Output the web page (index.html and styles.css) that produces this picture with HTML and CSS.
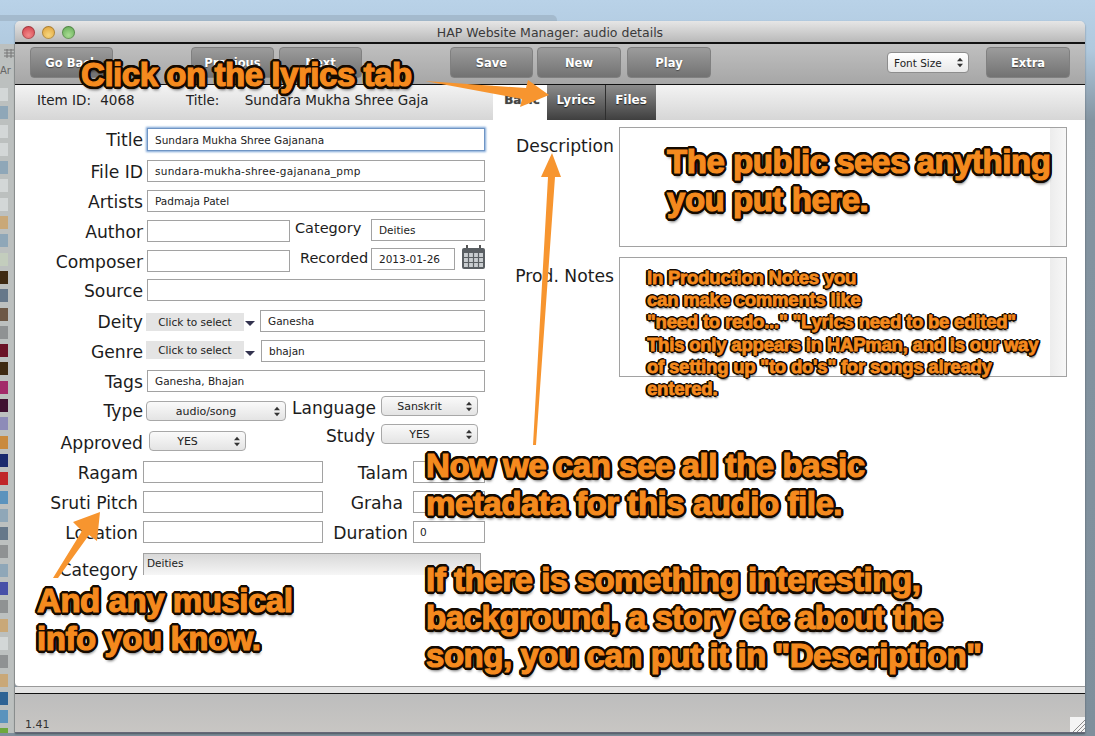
FILE: index.html
```html
<!DOCTYPE html>
<html lang="en">

<head>
    <meta charset="UTF-8">
    <title>HAP Website Manager: audio details</title>
    <link rel="stylesheet" href="styles.css">
</head>

<body>
    <!-- Window peeking out behind the app -->
    <div class="back-window"></div>

    <div class="desktop">
        <!-- Strip of the window behind, left of the app -->
        <div class="side-strip">
            <svg class="side-icon" viewBox="0 0 10 10"><path d="M0 1h10M0 4h10M0 7h10M3 0v9M7 0v9" stroke="#777" fill="none"/></svg>
            <div class="side-label">Ar</div>
            <div class="tile pale"></div>
            <div class="tile steel"></div>
            <div class="tile pale"></div>
            <div class="tile pale"></div>
            <div class="tile steel"></div>
            <div class="tile pale"></div>
            <div class="tile pale"></div>
            <div class="tile tan"></div>
            <div class="tile steel"></div>
            <div class="tile sage"></div>
            <div class="tile umber"></div>
            <div class="tile slate"></div>
            <div class="tile brown"></div>
            <div class="tile grey"></div>
            <div class="tile wine"></div>
            <div class="tile umber"></div>
            <div class="tile magenta"></div>
            <div class="tile plum"></div>
            <div class="tile lavender"></div>
            <div class="tile orange"></div>
            <div class="tile navy"></div>
            <div class="tile red"></div>
            <div class="tile sky"></div>
            <div class="tile steel"></div>
            <div class="tile slate"></div>
            <div class="tile grey"></div>
            <div class="tile steel"></div>
            <div class="tile indigo"></div>
            <div class="tile grey"></div>
            <div class="tile tan"></div>
            <div class="tile pale"></div>
            <div class="tile grey"></div>
            <div class="tile tan"></div>
            <div class="tile ocean"></div>
            <div class="tile sky"></div>
            <div class="tile green"></div>
        </div>

        <div class="window">
            <div class="titlebar">
                <div class="lights">
                    <span class="light light-red"></span>
                    <span class="light light-yellow"></span>
                    <span class="light light-green"></span>
                </div>
                HAP Website Manager: audio details
            </div>

            <div class="toolbar">
                <div class="btn btn-back">Go Back</div>
                <div class="btn btn-prev">Previous</div>
                <div class="btn btn-next">Next</div>
                <div class="btn btn-save">Save</div>
                <div class="btn btn-new">New</div>
                <div class="btn btn-play">Play</div>
                <div class="font-select">
                    Font Size
                    <svg class="updown" viewBox="0 0 7 11"><path d="M3.500 0 7 4H0zM3.500 11 0 7h7z"/></svg>
                </div>
                <div class="btn btn-extra">Extra</div>
            </div>

            <div class="tabstrip">
                <div class="item-info">
                    <span class="info-id">Item ID:</span>
                    <span class="info-num">4068</span>
                    <span class="info-title">Title:</span>
                    <span>Sundara Mukha Shree Gaja</span>
                </div>
                <div class="tab tab-active">Basic</div>
                <div class="tab tab-lyrics">Lyrics</div>
                <div class="tab tab-files">Files</div>
            </div>

            <div class="content">
                <!-- Left column of fields -->
                <div class="form">
                    <div class="row row-title">
                        <div class="label">Title</div>
                        <div class="field field-focus">Sundara Mukha Shree Gajanana</div>
                    </div>
                    <div class="row">
                        <div class="label">File ID</div>
                        <div class="field w-full spaced">sundara-mukha-shree-gajanana_pmp</div>
                    </div>
                    <div class="row">
                        <div class="label">Artists</div>
                        <div class="field w-full">Padmaja Patel</div>
                    </div>
                    <div class="row">
                        <div class="label">Author</div>
                        <div class="field w-half"></div>
                        <div class="side-name side-category">Category</div>
                        <div class="field w-cat up-1">Deities</div>
                    </div>
                    <div class="row row-composer">
                        <div class="label">Composer</div>
                        <div class="field w-half"></div>
                        <div class="side-name side-recorded">Recorded</div>
                        <div class="field w-date up-2">2013-01-26</div>
                        <svg class="calendar" viewBox="0 0 23 25">
                            <rect x="4" y="0" width="2" height="4" fill="#555"/>
                            <rect x="17" y="0" width="2" height="4" fill="#555"/>
                            <rect x="0" y="3" width="23" height="21" rx="2" fill="#5a5f63"/>
                            <path d="M2 8h19v14H2z" fill="#c9cdd0"/>
                            <path d="M6.500 8v14M11.500 8v14M16.500 8v14M2 12.500h19M2 17.500h19" stroke="#5a5f63" stroke-width="1.200"/>
                        </svg>
                    </div>
                    <div class="row row-source">
                        <div class="label">Source</div>
                        <div class="field w-full"></div>
                    </div>
                    <div class="row">
                        <div class="label">Deity</div>
                        <div class="picker">Click to select</div>
                        <div class="picker-arrow"></div>
                        <div class="field w-pick">Ganesha</div>
                    </div>
                    <div class="row">
                        <div class="label">Genre</div>
                        <div class="picker picker-high">Click to select</div>
                        <div class="picker-arrow"></div>
                        <div class="field w-pick2">bhajan</div>
                    </div>
                    <div class="row">
                        <div class="label">Tags</div>
                        <div class="field w-full">Ganesha, Bhajan</div>
                    </div>
                    <div class="row row-type">
                        <div class="label label-up">Type</div>
                        <div class="select w-type">audio/song
                            <svg class="updown" viewBox="0 0 7 11"><path d="M3.500 0 7 4H0zM3.500 11 0 7h7z"/></svg>
                        </div>
                        <div class="side-name side-language">Language</div>
                        <div class="select w-lang lift-5">Sanskrit
                            <svg class="updown" viewBox="0 0 7 11"><path d="M3.500 0 7 4H0zM3.500 11 0 7h7z"/></svg>
                        </div>
                    </div>
                    <div class="row row-approved">
                        <div class="label">Approved</div>
                        <div class="select w-appr">YES
                            <svg class="updown" viewBox="0 0 7 11"><path d="M3.500 0 7 4H0zM3.500 11 0 7h7z"/></svg>
                        </div>
                        <div class="side-name side-study">Study</div>
                        <div class="select w-lang lift-8">YES
                            <svg class="updown" viewBox="0 0 7 11"><path d="M3.500 0 7 4H0zM3.500 11 0 7h7z"/></svg>
                        </div>
                    </div>
                    <div class="row">
                        <div class="label label-short">Ragam</div>
                        <div class="field w-music"></div>
                        <div class="side-name side-music">Talam</div>
                        <div class="field w-small"></div>
                    </div>
                    <div class="row">
                        <div class="label label-short">Sruti Pitch</div>
                        <div class="field w-music"></div>
                        <div class="side-name side-music side-graha">Graha</div>
                        <div class="field w-small"></div>
                    </div>
                    <div class="row row-location">
                        <div class="label label-short">Location</div>
                        <div class="field w-music"></div>
                        <div class="side-name side-music">Duration</div>
                        <div class="field w-small">0</div>
                    </div>
                    <div class="row">
                        <div class="label label-short label-low">Category</div>
                        <div class="category-box">Deities</div>
                    </div>
                </div>

                <!-- Right column of text areas -->
                <div class="notes">
                    <div class="note-row">
                        <div class="note-label">Description</div>
                        <div class="textarea"><div class="scroll-track"></div></div>
                    </div>
                    <div class="note-row">
                        <div class="note-label">Prod. Notes</div>
                        <div class="textarea"><div class="scroll-track"></div></div>
                    </div>
                </div>
            </div>

            <div class="status-gap"></div>
            <div class="statusbar">
                1.41
                <svg class="grip" viewBox="0 0 15 15">
                    <rect width="15" height="15" fill="#f4f4f4"/>
                    <path d="M3 15 15 3M7 15l8-8M11 15l4-4" stroke="#8a8a8a" stroke-width="1"/>
                </svg>
            </div>
        </div>

        <div class="right-gap"></div>
    </div>

    <!-- Callouts drawn over the screenshot -->
    <svg class="arrows" viewBox="0 0 1095 736">
        <path d="M425 81 L526 88 L528 80 L549 95 L520 107 L522 99 Z"/>
        <path d="M533 445 L548 177 L541 177 L552 153 L561 177 L555 177 L536 445 Z"/>
        <path d="M53 578 L82 531 L73 522 L100 512 L97 541 L89 535 L58 578 Z"/>
    </svg>
    <div class="callout big callout-click">Click on the lyrics tab</div>
    <div class="callout big callout-public">The public sees anything<br>you put here.</div>
    <div class="callout small callout-prod">In Production Notes you<br>can make comments like<br>"need to redo..." "Lyrics need to be edited"<br>This only appears in HAPman, and is our way<br>of setting up "to do's" for songs already<br>entered.</div>
    <div class="callout big callout-meta">Now we can see all the basic<br>metadata for this audio file.</div>
    <div class="callout big callout-story">If there is something interesting,<br>background, a story etc about the<br>song, you can put it in "Description"</div>
    <div class="callout big callout-music">And any musical<br>info you know.</div>
</body>

</html>
```

FILE: styles.css
```css
/* General Styling */
html, body {
    margin: 0;
    padding: 0;
}

body {
    position: relative;
    width: 1095px;
    height: 736px;
    overflow: hidden;
    background: linear-gradient(180deg, #b9d2e8 0, #b0c9de 50px, #8494a1 120px, #7f8f9c 100%);
    font-family: "DejaVu Sans", sans-serif;
    color: #222;
}

.back-window {
    width: 557px;
    height: 6px;
    margin-top: 15px;
    background: #a4bacd;
    border-top-right-radius: 5px;
}

.desktop {
    display: flex;
    height: 715px;
}

/* Left strip */
.side-strip {
    width: 15px;
    height: 689px;
    margin-top: 23px;
    padding: 5px 7px 0 0;
    box-sizing: border-box;
    background: #bcc0bf;
    border-right: 1px solid #9a9e9e;
    overflow: hidden;
}

.side-icon {
    display: block;
    width: 10px;
    height: 10px;
    margin-left: 4px;
}

.side-label {
    height: 29px;
    width: 14px;
    padding-top: 6px;
    box-sizing: border-box;
    font-size: 10px;
    color: #666;
}

.tile {
    width: 8px;
    height: 13px;
    margin-bottom: 5.300px;
}

.pale { background: #d3d7d7; }
.steel { background: #8fa7b8; }
.tan { background: #c9a878; }
.sage { background: #c3cdbd; }
.umber { background: #3e2a12; }
.slate { background: #66788a; }
.brown { background: #6d5846; }
.grey { background: #8f9293; }
.wine { background: #6b1226; }
.magenta { background: #a32a6a; }
.plum { background: #3f1030; }
.lavender { background: #8d8bb8; }
.orange { background: #c98a3e; }
.navy { background: #1a2a6e; }
.red { background: #c0262a; }
.sky { background: #5b93bd; }
.indigo { background: #4850a8; }
.ocean { background: #2e6394; }
.green { background: #6da83e; }

/* Window */
.window {
    width: 1070px;
    height: 712px;
    display: flex;
    flex-direction: column;
    border-radius: 5px 5px 0 0;
    overflow: hidden;
    box-shadow: 0 1px 2px rgba(0, 0, 0, 0.4);
}

.right-gap {
    flex: 1;
}

.titlebar {
    position: relative;
    height: 21px;
    line-height: 23px;
    text-align: center;
    font-size: 12.500px;
    color: #3a3a3a;
    background: linear-gradient(180deg, #e6e6e6, #b9b9b9);
    border-bottom: 2px solid #111;
}

.lights {
    position: absolute;
    left: 7px;
    top: 5px;
    display: flex;
    gap: 7px;
}

.light {
    width: 13px;
    height: 13px;
    border-radius: 50%;
    box-shadow: inset 0 0 0 1px rgba(0, 0, 0, 0.25);
}

.light-red { background: radial-gradient(circle at 50% 70%, #f28a8a, #cf3440); }
.light-yellow { background: radial-gradient(circle at 50% 70%, #f6d67e, #dd9a2e); }
.light-green { background: radial-gradient(circle at 50% 70%, #a8dc92, #58a44c); }

.toolbar {
    display: flex;
    align-items: flex-start;
    height: 41px;
    padding-top: 3px;
    box-sizing: border-box;
    background: linear-gradient(180deg, #c0c0c0, #a6a6a6);
    border-bottom: 1px solid #111;
}

.btn {
    width: 83px;
    height: 31px;
    line-height: 30px;
    text-align: center;
    font-size: 11.500px;
    font-weight: bold;
    color: #fff;
    text-shadow: 0 1px 1px #444;
    background: linear-gradient(180deg, #9c9c9c, #727272);
    border: 1px solid #808080;
    border-radius: 4px;
    box-sizing: border-box;
}

.btn-back { margin-left: 15px; }
.btn-prev { margin-left: 78px; }
.btn-next { margin-left: 5px; }
.btn-save { margin-left: 88px; }
.btn-new { margin-left: 4px; width: 84px; }
.btn-play { margin-left: 6px; width: 84px; }
.btn-extra { margin-left: 17px; width: 84px; }

.font-select {
    display: flex;
    justify-content: space-between;
    align-items: center;
    width: 82px;
    height: 21px;
    margin: 5px 0 0 176px;
    padding: 0 5px 0 6px;
    box-sizing: border-box;
    font-size: 10.500px;
    color: #222;
    background: linear-gradient(180deg, #fff, #e8e8e8);
    border: 1px solid #8d8d8d;
    border-radius: 4px;
}

.updown {
    width: 6px;
    height: 11px;
    fill: #333;
}

/* Tabs */
.tabstrip {
    display: flex;
    height: 35px;
    background: linear-gradient(180deg, #f3f3f3, #d6d6d6);
}

.item-info {
    width: 456px;
    padding: 7px 0 0 22px;
    box-sizing: border-box;
    font-size: 13.500px;
    color: #222;
}

.info-num { margin-left: 5px; }
.info-title { margin: 0 21px 0 47px; }

.tab {
    font-size: 12px;
    font-weight: bold;
    line-height: 30px;
    text-align: center;
    color: #fff;
    text-shadow: 0 1px 1px #222;
    background: linear-gradient(180deg, #8c8c8c, #3f3f3f);
}

.tab-active {
    margin-left: 22px;
    width: 54px;
    padding-left: 4px;
    box-sizing: border-box;
    color: #444;
    text-shadow: 0 0 1px #888;
    background: #fff;
}

.tab-lyrics {
    width: 58px;
    border-right: 1px solid #2e2e2e;
}

.tab-files {
    width: 50px;
}

/* Form */
.content {
    flex: 1;
    display: flex;
    background: #fff;
    border-bottom: 1px solid #999;
    border-radius: 0 0 0 4px;
}

.form {
    width: 475px;
    padding-top: 8px;
}

.row {
    display: flex;
    align-items: flex-start;
    height: 30px;
}

.row-title { height: 32px; }
.row-composer { height: 29px; }
.row-source { height: 31px; }
.row-type { margin-top: 1px; height: 30px; }
.row-location { height: 32px; }

.label {
    width: 128px;
    height: 22px;
    margin-right: 4px;
    line-height: 24px;
    text-align: right;
    font-size: 17.200px;
    color: #1c1c1c;
    flex-shrink: 0;
}

.label-short {
    width: 123px;
    margin-right: 5px;
}

.label-low {
    margin-top: 5px;
}

.label-up {
    margin-top: -2px;
}

.field {
    height: 22px;
    line-height: 20px;
    padding-left: 7px;
    box-sizing: border-box;
    font-size: 10.500px;
    color: #222;
    background: #fff;
    border: 1px solid #a2a2a2;
    flex-shrink: 0;
}

.field-focus {
    width: 338px;
    height: 23px;
    line-height: 22px;
    border: 1px solid #6f95c4;
    box-shadow: 0 0 2px 1px #7ba4d6;
}

.spaced { letter-spacing: 0.280px; }

.w-full { width: 338px; }
.w-half { width: 143px; }
.w-cat { width: 114px; }
.w-date { width: 84px; }
.w-pick { width: 225px; }
.w-pick2 { width: 224px; margin-left: 1px; }
.w-music { width: 180px; }
.w-small { width: 72px; padding-left: 6px; }

.up-1 { margin-top: -1px; }
.up-2 { margin-top: -2px; }

.side-name {
    flex-shrink: 0;
    text-align: right;
    font-size: 15px;
    color: #1c1c1c;
}

.side-category { width: 62px; margin: -3px 14px 0 5px; line-height: 22px; font-size: 14.500px; text-align: left; }
.side-recorded { width: 64px; margin: -3px 7px 0 10px; line-height: 22px; font-size: 14.500px; text-align: left; }
.side-language { width: 90px; margin: -4px 5px 0 0; line-height: 22px; font-size: 17px; }
.side-study { width: 129px; margin: -6px 6px 0 0; line-height: 22px; font-size: 17px; }
.side-music { width: 85px; margin-right: 5px; line-height: 24px; font-size: 17.200px; }
.side-graha { width: 80px; margin-right: 10px; }

.calendar {
    width: 23px;
    height: 25px;
    margin: -5px 0 0 7px;
}

.picker {
    width: 98px;
    height: 18px;
    line-height: 18px;
    margin: 3px 0 0 -1px;
    text-align: center;
    font-size: 10.500px;
    background: #e4e4e4;
    flex-shrink: 0;
}

.picker-high {
    margin-top: 1px;
}

.picker-arrow {
    width: 0;
    height: 0;
    margin: 11px 5px 0 1px;
    border-left: 5px solid transparent;
    border-right: 5px solid transparent;
    border-top: 5px solid #33334f;
    flex-shrink: 0;
}

.select {
    display: flex;
    justify-content: space-between;
    align-items: center;
    height: 20px;
    padding: 0 5px 0 0;
    box-sizing: border-box;
    font-size: 11px;
    color: #222;
    background: linear-gradient(180deg, #fafafa, #e4e4e4);
    border: 1px solid #a8a8a8;
    border-radius: 4px;
    flex-shrink: 0;
}

.select::before {
    content: "";
    width: 0;
}

.select .updown {
    margin-left: 9px;
}

.w-type { width: 140px; margin-left: -1px; }
.w-appr { width: 97px; margin-left: 2px; }
.w-lang { width: 97px; }
.lift-5 { margin-top: -5px; }
.lift-8 { margin-top: -7px; }

.category-box {
    width: 338px;
    height: 22px;
    padding: 3px 0 0 3px;
    box-sizing: border-box;
    font-size: 10.500px;
    background: linear-gradient(180deg, #d8d8d8, #f6f6f6);
    border: 1px solid #a2a2a2;
    border-bottom: 0;
}

/* Text areas */
.notes {
    padding-top: 7px;
}

.note-row {
    display: flex;
    margin-bottom: 10px;
}

.note-label {
    width: 124px;
    padding-top: 9px;
    margin-right: 5px;
    text-align: right;
    font-size: 17.200px;
    color: #1c1c1c;
}

.textarea {
    display: flex;
    justify-content: flex-end;
    width: 448px;
    height: 120px;
    box-sizing: border-box;
    background: #fff;
    border: 1px solid #a2a2a2;
}

.scroll-track {
    width: 16px;
    background: linear-gradient(90deg, #ececec, #f7f7f7);
}

/* Bottom of the window */
.status-gap {
    height: 6px;
    background: #e4e4e4;
    border-bottom: 1px solid #111;
}

.statusbar {
    position: relative;
    height: 39px;
    padding: 24px 0 0 10px;
    box-sizing: border-box;
    font-size: 11px;
    color: #333;
    background: linear-gradient(180deg, #bdbdbd, #c8c6c3);
    border-bottom: 1px solid #667;
}

.grip {
    position: absolute;
    right: 0;
    bottom: 0;
    width: 15px;
    height: 15px;
}

/* Callouts */
.arrows {
    position: absolute;
    left: 0;
    top: 0;
    width: 1095px;
    height: 736px;
    fill: #f7952f;
}

.callout {
    position: absolute;
    font-family: "Liberation Sans", Arial, sans-serif;
    font-weight: bold;
    white-space: nowrap;
    color: #f58a1e;
    -webkit-text-stroke: 1.200px #f58a1e;
}

.big {
    font-size: 33px;
    line-height: 38px;
    letter-spacing: -0.450px;
    text-shadow:
        3px 0 0 #140a00, -3px 0 0 #140a00, 0 3px 0 #140a00, 0 -3px 0 #140a00,
        2px 2px 0 #140a00, -2px 2px 0 #140a00, 2px -2px 0 #140a00, -2px -2px 0 #140a00,
        3px 1px 0 #140a00, -3px 1px 0 #140a00, 3px -1px 0 #140a00, -3px -1px 0 #140a00,
        1px 3px 0 #140a00, -1px 3px 0 #140a00, 1px -3px 0 #140a00, -1px -3px 0 #140a00,
        1px 4px 3px rgba(0, 0, 0, 0.6);
}

.small {
    font-size: 18.500px;
    line-height: 22.200px;
    letter-spacing: -0.200px;
    -webkit-text-stroke: 0.800px #f58a1e;
    text-shadow:
        2px 0 0 #140a00, -2px 0 0 #140a00, 0 2px 0 #140a00, 0 -2px 0 #140a00,
        1px 1px 0 #140a00, -1px 1px 0 #140a00, 1px -1px 0 #140a00, -1px -1px 0 #140a00,
        2px 1px 0 #140a00, -2px 1px 0 #140a00, 2px -1px 0 #140a00, -2px -1px 0 #140a00,
        1px 3px 2px rgba(0, 0, 0, 0.6);
}

.callout-click { left: 81px; top: 56px; }
.callout-public { left: 667px; top: 143px; }
.callout-prod { left: 647px; top: 267px; }
.callout-meta { left: 426px; top: 447px; }
.callout-story { left: 426px; top: 561px; }
.callout-music { left: 37px; top: 582px; }
```
